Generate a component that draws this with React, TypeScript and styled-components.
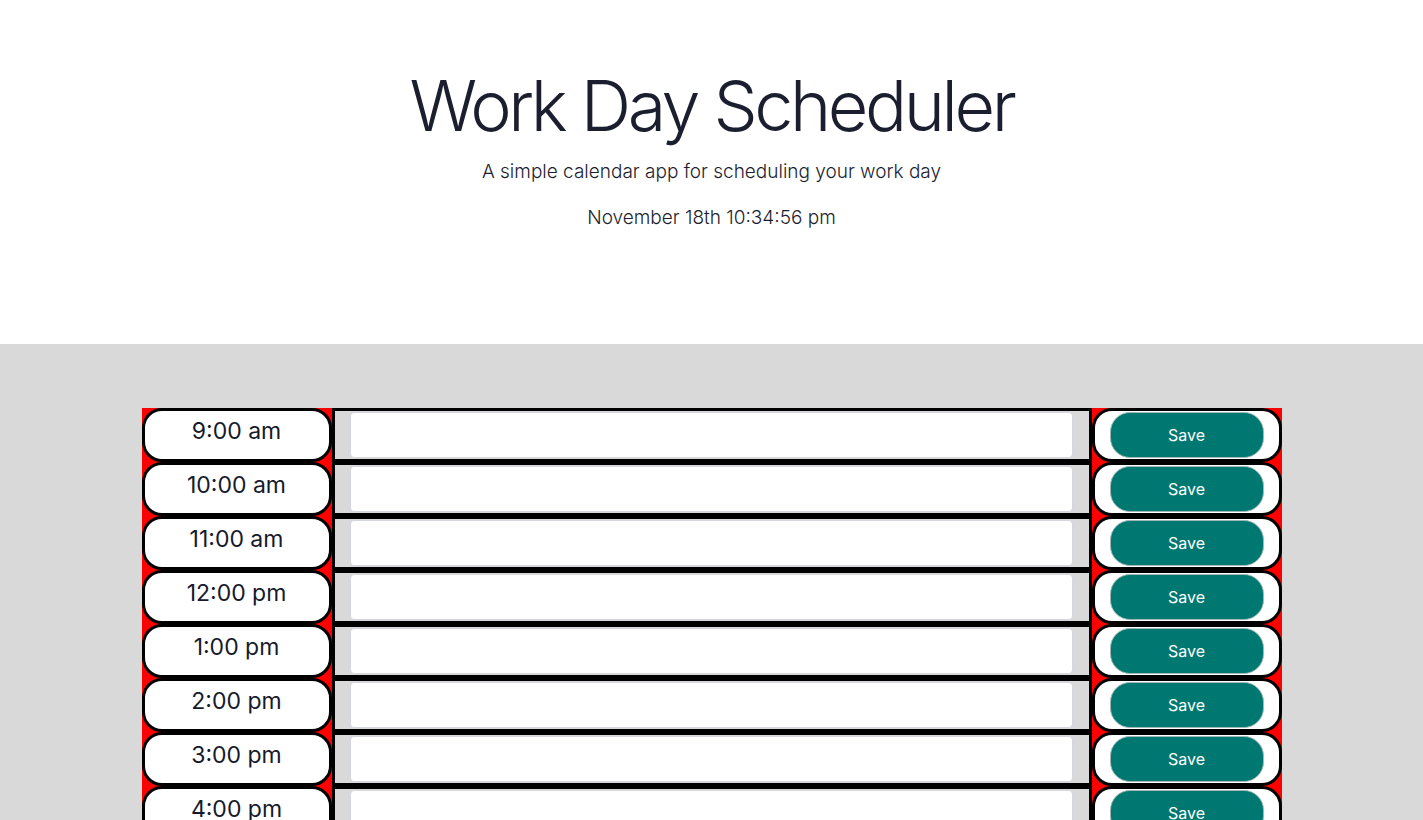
import React from "react";
import styled, { createGlobalStyle } from "styled-components";

const Global = createGlobalStyle`
  html, body { margin: 0; padding: 0; }
  body {
    font-family: Inter, "Noto Sans", sans-serif;
    color: #1b1e2f;
    background: #d9d9d9;
  }
`;

const Header = styled.header`
  background: #ffffff;
  height: 344px;
  box-sizing: border-box;
  padding-top: 63px;
  text-align: center;
`;

const Title = styled.h1`
  margin: 0 0 8px;
  font-size: 70px;
  font-weight: 300;
  line-height: 86px;
  letter-spacing: -3.4px;
`;

const Lead = styled.p`
  margin: 0 0 16px;
  font-size: 19px;
  font-weight: 300;
  line-height: 30px;
  color: #1b1e2f;
`;

const Main = styled.main`
  padding-top: 64px;
  display: flex;
  justify-content: center;
`;

const Container = styled.div`
  width: 1140px;
  display: flex;
  flex-direction: column;
`;

const Row = styled.div`
  display: grid;
  grid-template-columns: 190px 760px 190px;
  height: 54px;
`;

const SideCell = styled.div`
  background: #ff0000;
  display: flex;
`;

const Pill = styled.div<{ $top?: boolean }>`
  flex: 1;
  background: #ffffff;
  border: 3px solid #000000;
  border-radius: 20px;
  box-sizing: border-box;
  display: flex;
  justify-content: center;
  align-items: ${(p) => (p.$top ? "flex-start" : "center")};
  padding: ${(p) => (p.$top ? "7px 0 0" : "0 15px")};
`;

const HourText = styled.span`
  font-size: 23px;
  line-height: 1.21;
  font-weight: 400;
  color: #161a2b;
`;

const TextCell = styled.div`
  border: 3px solid #000000;
  background: #d9d9d9;
  box-sizing: border-box;
  padding: 1px 16px 0 15px;
  display: flex;
  align-items: flex-start;
`;

const Note = styled.textarea`
  width: 100%;
  height: 46px;
  box-sizing: border-box;
  background: #ffffff;
  border: 1px solid #d3d6dc;
  border-radius: 4px;
  resize: none;
  font-family: inherit;
  font-size: 16px;
  padding: 6px 12px;
  outline: none;
`;

const SaveButton = styled.button`
  width: 100%;
  height: 46px;
  background: #007872;
  color: #ffffff;
  border: 1px solid #9fb7b5;
  border-radius: 20px;
  font-family: Inter, "Noto Sans", sans-serif;
  font-size: 16px;
  font-weight: 400;
  cursor: pointer;
`;

const hours = [
  "9:00 am",
  "10:00 am",
  "11:00 am",
  "12:00 pm",
  "1:00 pm",
  "2:00 pm",
  "3:00 pm",
  "4:00 pm",
  "5:00 pm",
];

export default function App() {
  return (
    <>
      <Global />
      <Header>
        <Title>Work Day Scheduler</Title>
        <Lead>A simple calendar app for scheduling your work day</Lead>
        <Lead>November 18th 10:34:56 pm</Lead>
      </Header>
      <Main>
        <Container>
          {hours.map((h) => (
            <Row key={h}>
              <SideCell>
                <Pill $top>
                  <HourText>{h}</HourText>
                </Pill>
              </SideCell>
              <TextCell>
                <Note aria-label={h} />
              </TextCell>
              <SideCell>
                <Pill>
                  <SaveButton>Save</SaveButton>
                </Pill>
              </SideCell>
            </Row>
          ))}
        </Container>
      </Main>
    </>
  );
}
